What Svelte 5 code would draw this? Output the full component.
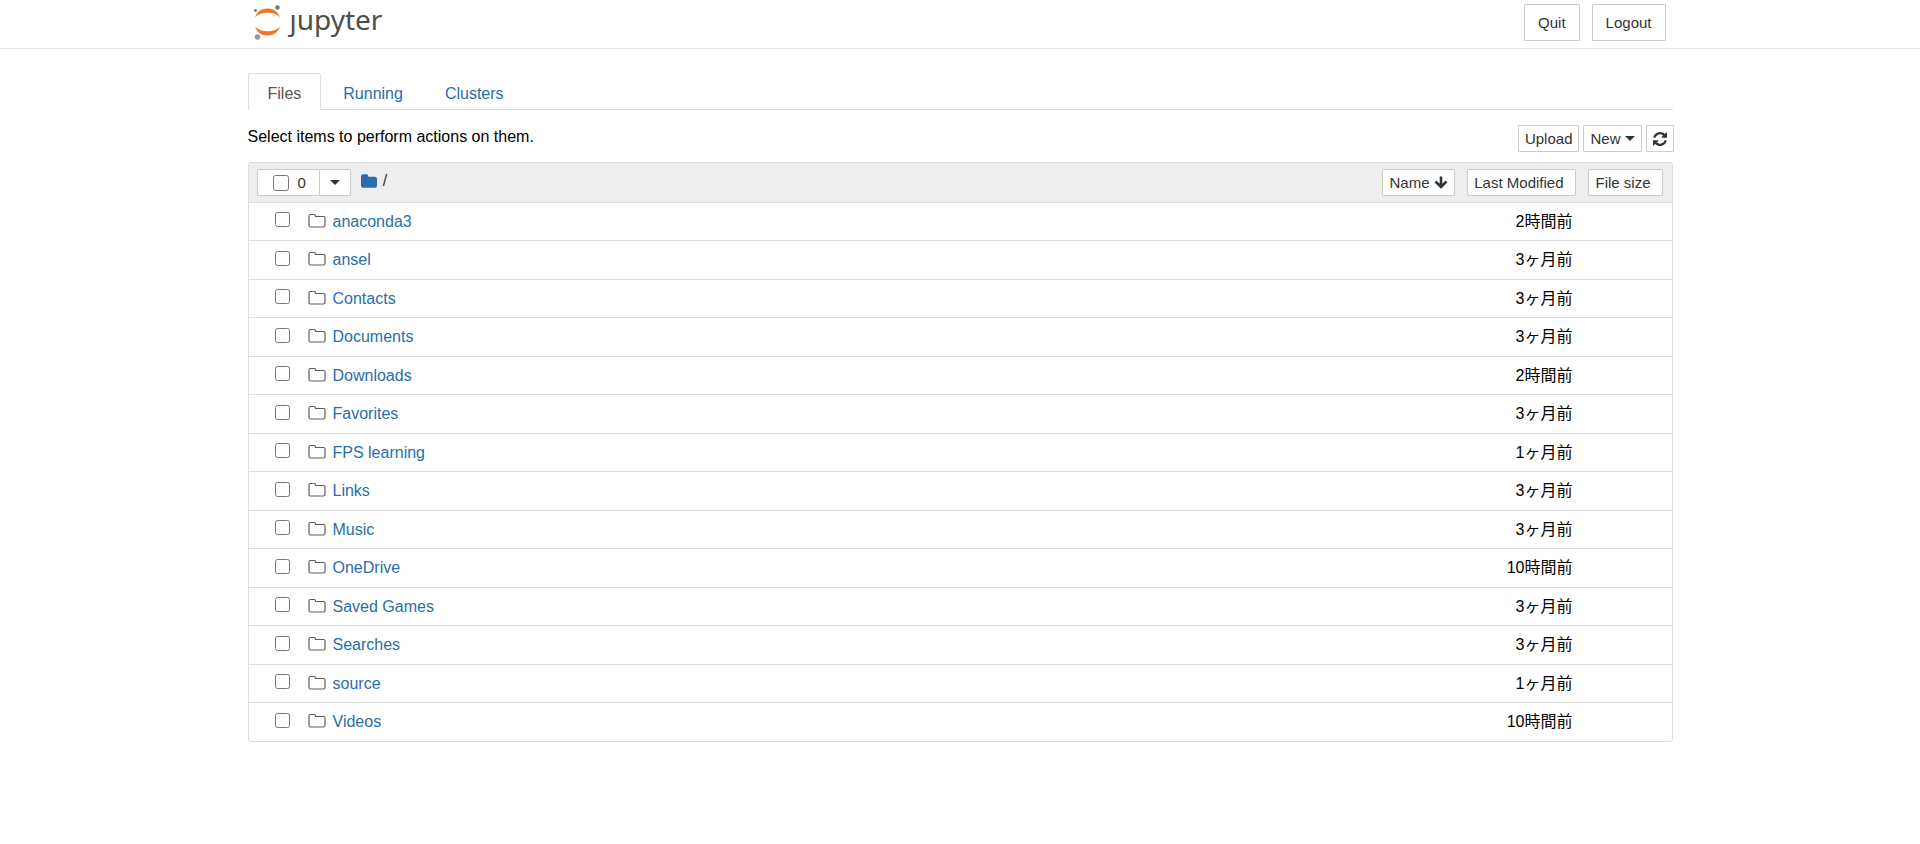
<script>
  let items = [
    { name: "anaconda3", modified: "2時間前" },
    { name: "ansel", modified: "3ヶ月前" },
    { name: "Contacts", modified: "3ヶ月前" },
    { name: "Documents", modified: "3ヶ月前" },
    { name: "Downloads", modified: "2時間前" },
    { name: "Favorites", modified: "3ヶ月前" },
    { name: "FPS learning", modified: "1ヶ月前" },
    { name: "Links", modified: "3ヶ月前" },
    { name: "Music", modified: "3ヶ月前" },
    { name: "OneDrive", modified: "10時間前" },
    { name: "Saved Games", modified: "3ヶ月前" },
    { name: "Searches", modified: "3ヶ月前" },
    { name: "source", modified: "1ヶ月前" },
    { name: "Videos", modified: "10時間前" },
  ].map((item) => ({ ...item, checked: false }));

  let tabs = ["Files", "Running", "Clusters"];
  let active = "Files";

  $: selected = items.filter((item) => item.checked).length;

  function toggleAll(event) {
    const checked = event.target.checked;
    items = items.map((item) => ({ ...item, checked }));
  }
</script>

<header>
  <div class="container bar">
    <a class="logo" href="#tree" aria-label="jupyter">
      <svg width="28" height="36" viewBox="0 0 28 36" aria-hidden="true">
        <path fill="#f37726" d="M2 13.5C4 7.5 8.500 4.500 14.500 4.500S25 7.500 27 13.500C24 10 19.500 8.700 14.500 8.700S5 10 2 13.500Z" />
        <path fill="#f37726" d="M2 22.500C4 28.500 8.500 31.500 14.500 31.500S25 28.500 27 22.500C24 26 19.500 27.300 14.500 27.300S5 26 2 22.500Z" />
        <circle cx="2.500" cy="6.500" r="1.400" fill="#767677" />
        <circle cx="24.500" cy="3.500" r="2.200" fill="#767677" />
        <circle cx="4.500" cy="33" r="2.700" fill="#989798" />
      </svg>
      <span>ȷupyter</span>
    </a>
    <div class="session">
      <button class="btn">Quit</button>
      <button class="btn">Logout</button>
    </div>
  </div>
</header>

<main class="container">
  <nav class="tabs">
    {#each tabs as tab}
      <a href={"#" + tab.toLowerCase()} class:active={tab === active} on:click={() => (active = tab)}>{tab}</a>
    {/each}
  </nav>

  <div class="toolbar">
    <span>Select items to perform actions on them.</span>
    <div class="actions">
      <button class="btn btn-xs">Upload</button>
      <button class="btn btn-xs">New <i class="caret"></i></button>
      <button class="btn btn-xs" aria-label="Refresh notebook list">
        <svg width="14" height="14" viewBox="0 0 1536 1536" aria-hidden="true">
          <path fill="currentColor" d="M1511 928q0 5-1 7-64 268-268 434.500T764 1536q-146 0-282.500-55T238 1324l-129 129q-19 19-45 19t-45-19-19-45V960q0-26 19-45t45-19h448q26 0 45 19t19 45-19 45l-137 137q71 66 161 102t187 36q134 0 250-65t186-179q11-17 53-117 8-23 30-23h192q13 0 22.500 9.500t9.500 22.500zm25-800v448q0 26-19 45t-45 19h-448q-26 0-45-19t-19-45 19-45l138-138Q969 256 768 256q-134 0-250 65T332 500q-11 17-53 117-8 23-30 23H50q-13 0-22.500-9.500T18 608v-7q65-268 270-434.500T768 0q146 0 284 55.500T1297 212l130-129q19-19 45-19t45 19 19 45z" />
        </svg>
      </button>
    </div>
  </div>

  <div class="list">
    <table>
      <colgroup>
        <col />
        <col class="modified-col" />
        <col class="size-col" />
      </colgroup>
      <thead>
        <tr>
          <th>
            <div class="list-head">
              <div class="selector">
                <label class="btn btn-xs">
                  <input type="checkbox" aria-label="Select all" on:change={toggleAll} />
                  <span>{selected}</span>
                </label>
                <button class="btn btn-xs" aria-label="Select by type"><i class="caret"></i></button>
              </div>
              <a class="crumb" href="#tree" aria-label="Home">
                <svg width="16" height="14" viewBox="0 0 1664 1408" aria-hidden="true">
                  <path fill="currentColor" d="M1664 480v704q0 92-66 158t-158 66H224q-92 0-158-66T0 1184V224q0-92 66-158T224 0h320q92 0 158 66t66 158v32h672q92 0 158 66t66 158z" />
                </svg>
              </a>
              <span class="slash">/</span>
              <button class="btn btn-xs sort-name">
                Name
                <svg width="14" height="13" viewBox="0 0 14 13" aria-hidden="true">
                  <path fill="none" stroke="currentColor" stroke-width="2.600" d="M7 0.500V11M1.500 5.500L7 11L12.500 5.500" />
                </svg>
              </button>
            </div>
          </th>
          <th><button class="btn btn-xs sort">Last Modified</button></th>
          <th><button class="btn btn-xs sort size">File size</button></th>
        </tr>
      </thead>
      <tbody>
        {#each items as item}
          <tr>
            <td>
              <div class="item">
                <input type="checkbox" aria-label={"Select " + item.name} bind:checked={item.checked} />
                <svg width="18" height="16" viewBox="0 0 18 16" aria-hidden="true">
                  <path fill="none" stroke="#5e5e5e" stroke-width="1.200" d="M1 3Q1 1.500 2.500 1.500H6Q7.500 1.500 7.500 3V3.500H15.500Q17 3.500 17 5V12.500Q17 14 15.500 14H2.500Q1 14 1 12.500Z" />
                </svg>
                <a href={"#tree/" + encodeURIComponent(item.name)}>{item.name}</a>
              </div>
            </td>
            <td class="modified">{item.modified}</td>
            <td></td>
          </tr>
        {/each}
      </tbody>
    </table>
  </div>
</main>

<style>
  :global(body) {
    margin: 0;
    background: #fff;
    color: #000;
    font-family: "Liberation Sans", Arial, "Noto Sans CJK JP", sans-serif;
    font-size: 16px;
    line-height: 22px;
  }

  a {
    color: #296eaa;
    text-decoration: none;
  }

  .container {
    max-width: 1425px;
    margin: 0 auto;
  }

  header {
    border-bottom: 1px solid #e7e7e7;
  }

  .bar {
    display: flex;
    justify-content: space-between;
    height: 48px;
  }

  .logo {
    display: flex;
    align-items: flex-start;
    gap: 9px;
    padding: 4px 0 0 5px;
    color: #4e4e4e;
    font-family: "Noto Sans", "Open Sans", sans-serif;
    font-size: 28px;
    line-height: 30px;
  }

  .session {
    display: flex;
    align-items: flex-start;
    gap: 12px;
    padding: 4px 7px 0 0;
  }

  .btn {
    display: inline-flex;
    align-items: center;
    box-sizing: border-box;
    margin: 0;
    padding: 7px 13px;
    border: 1px solid #ccc;
    border-radius: 1px;
    background: #fff;
    color: #333;
    font-family: inherit;
    font-size: 15px;
    font-weight: normal;
    line-height: 21px;
    cursor: pointer;
  }

  .btn-xs {
    gap: 4px;
    padding: 2px 6px;
  }

  .caret {
    border-top: 5px solid #333;
    border-left: 5px solid transparent;
    border-right: 5px solid transparent;
  }

  .tabs {
    display: flex;
    gap: 2px;
    margin-top: 24px;
    border-bottom: 1px solid #ddd;
  }

  .tabs a {
    margin-bottom: -1px;
    padding: 9px 19px 4px;
    border: 1px solid transparent;
    border-radius: 3px 3px 0 0;
  }

  .tabs .active {
    border-color: #ddd;
    border-bottom-color: #fff;
    background: #fff;
    color: #555;
  }

  .toolbar {
    display: flex;
    justify-content: space-between;
    padding: 15px 0 10px;
  }

  .toolbar span {
    padding-top: 1px;
  }

  .actions {
    display: flex;
    gap: 4px;
    margin-right: -1px;
  }

  .list {
    border: 1px solid #ddd;
    border-radius: 3px;
    overflow: hidden;
  }

  table {
    width: 100%;
    table-layout: fixed;
    border-spacing: 0;
  }

  .modified-col {
    width: 121px;
  }

  .size-col {
    width: 96px;
  }

  th,
  td {
    box-sizing: border-box;
    height: 38px;
    padding: 0;
    border-bottom: 1px solid #ddd;
  }

  th {
    height: 40px;
    background: #eee;
    font-weight: normal;
    text-align: right;
    vertical-align: middle;
  }

  tr:nth-child(even) td {
    height: 39px;
  }

  tbody tr:last-child td {
    height: 38px;
    border-bottom: 0;
  }

  .list-head {
    display: flex;
    align-items: center;
    padding-left: 8px;
  }

  .selector {
    display: flex;
  }

  .selector label {
    gap: 9px;
    padding: 2px 13px 2px 15px;
    border-radius: 1px 0 0 1px;
  }

  .selector button {
    margin-left: -1px;
    padding: 2px 10px;
    border-radius: 0 1px 1px 0;
  }

  input[type="checkbox"] {
    width: 16px;
    height: 16px;
    margin: 0;
  }

  .crumb {
    display: flex;
    margin: 0 6px 4px 10px;
  }

  .slash {
    margin-bottom: 3px;
    color: #333;
  }

  .sort-name {
    margin-left: auto;
  }

  .sort {
    padding-right: 11px;
    vertical-align: middle;
  }

  .size {
    margin-right: 9px;
  }

  .item {
    display: flex;
    align-items: center;
    padding-left: 26px;
  }

  .item input[type="checkbox"] {
    width: 15px;
    height: 15px;
    margin-bottom: 4px;
  }

  .item svg {
    margin: 0 7px 2px 18px;
  }

  .modified {
    padding-right: 3px;
    text-align: right;
  }
</style>
